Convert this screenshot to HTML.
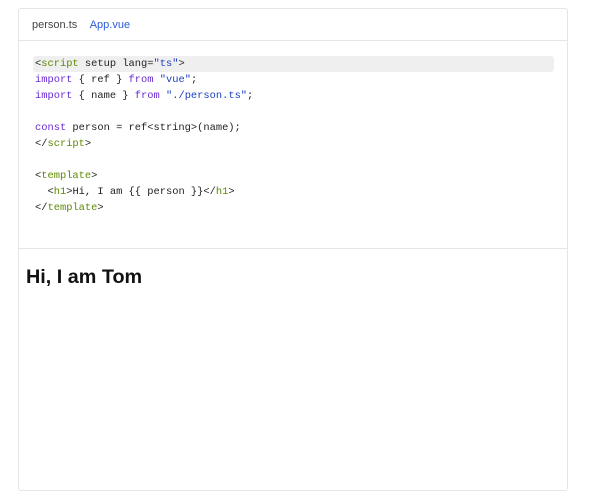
<!DOCTYPE html>
<html><head><style>
body{margin:0;background:#fff;width:598px;height:501px;overflow:hidden;font-family:"Liberation Sans",sans-serif}
.box{position:absolute;left:18px;top:8px;width:548px;height:481px;border:1px solid #e5e5e5;border-radius:3px}
.tabs{height:31px;border-bottom:1px solid #e5e5e5;font-size:11px;line-height:32px;padding-left:13px}
.tabs span{margin-right:10px;color:#444}
.tabs .a{color:#2a5bd7}
.hl{position:absolute;left:14px;top:47px;width:521px;height:16px;background:#efefef;border-radius:3px}
pre{position:absolute;left:16px;top:47px;margin:0;font-family:"Liberation Mono",monospace;font-size:10.4px;line-height:16px;color:#222}
.g{color:#5c8a00}.b{color:#1a3fc0}.p{color:#6a2bd3}
.sep{position:absolute;left:0;top:239px;width:548px;border-top:1px solid #e5e5e5}
h1{position:absolute;left:7px;top:257px;margin:0;font-size:19.8px;font-weight:bold;color:#111}
</style></head><body>
<div class="box">
<div class="tabs"><span>person.ts</span> <span class="a">App.vue</span></div>
<div class="hl"></div>
<pre>&lt;<span class="g">script</span> setup lang=<span class="b">"ts"</span>&gt;
<span class="p">import</span> { ref } <span class="p">from</span> <span class="b">"vue"</span>;
<span class="p">import</span> { name } <span class="p">from</span> <span class="b">"./person.ts"</span>;

<span class="p">const</span> person = ref&lt;string&gt;(name);
&lt;/<span class="g">script</span>&gt;

&lt;<span class="g">template</span>&gt;
  &lt;<span class="g">h1</span>&gt;Hi, I am {{ person }}&lt;/<span class="g">h1</span>&gt;
&lt;/<span class="g">template</span>&gt;</pre>
<div class="sep"></div>
<h1>Hi, I am Tom</h1>
</div>
</body></html>
